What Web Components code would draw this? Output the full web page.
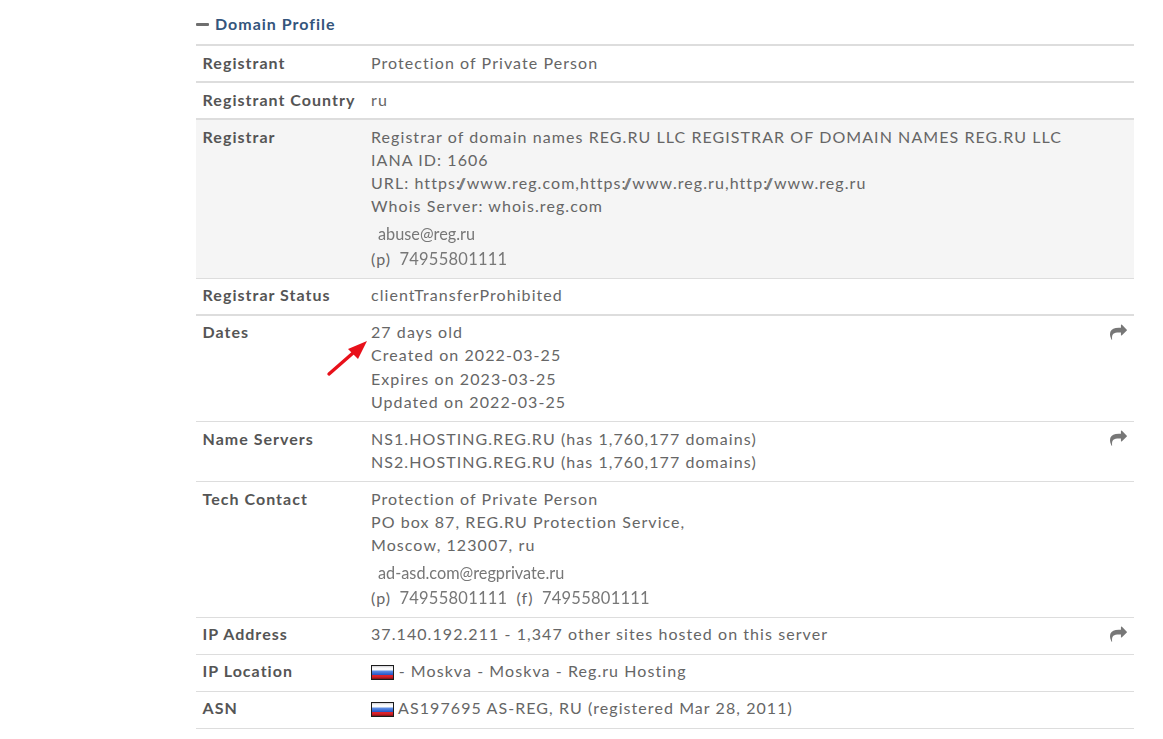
<!doctype html>
<html>
<head>
<meta charset="utf-8">
<title>Domain Profile</title>
<style>
  html, body { margin: 0; background: #fff; }
  body { font-family: "Lato", "Liberation Sans", sans-serif; color: #666; }
  .sl { letter-spacing: -2.4px; margin-right: 3px; }
</style>
</head>
<body>
<domain-profile title-text="Domain Profile">
  <profile-row label="Registrant" thick>Protection of Private Person</profile-row>
  <profile-row label="Registrant Country" thick>ru</profile-row>
  <profile-row label="Registrar" shaded>
    Registrar of domain names REG.RU LLC REGISTRAR OF DOMAIN NAMES REG.RU LLC<br>
    IANA ID: 1606<br>
    URL: https<span class="sl">://</span>www.reg.com,https<span class="sl">://</span>www.reg.ru,http<span class="sl">://</span>www.reg.ru<br>
    Whois Server: whois.reg.com
    <contact-info email="abuse@reg.ru" phone="74955801111"></contact-info>
  </profile-row>
  <profile-row label="Registrar Status" thick>clientTransferProhibited</profile-row>
  <profile-row label="Dates" share>
    27 days old<br>
    Created on 2022-03-25<br>
    Expires on 2023-03-25<br>
    Updated on 2022-03-25
    <red-arrow></red-arrow>
  </profile-row>
  <profile-row label="Name Servers" share>
    NS1.HOSTING.REG.RU (has 1,760,177 domains)<br>
    NS2.HOSTING.REG.RU (has 1,760,177 domains)
  </profile-row>
  <profile-row label="Tech Contact">
    Protection of Private Person<br>
    PO box 87, REG.RU Protection Service,<br>
    Moscow, 123007, ru
    <contact-info email="ad-asd.com@regprivate.ru" phone="74955801111" fax="74955801111"></contact-info>
  </profile-row>
  <profile-row label="IP Address" share>37.140.192.211 - 1,347 other sites hosted on this server</profile-row>
  <profile-row label="IP Location"><ru-flag></ru-flag> - Moskva - Moskva - Reg.ru Hosting</profile-row>
  <profile-row label="ASN"><ru-flag></ru-flag> AS197695 AS-REG, RU (registered Mar 28, 2011)</profile-row>
</domain-profile>

<template id="domain-profile-template">
  <style>
    :host {
      display: block;
      margin: 0 29px 0 196px;
      padding-top: 14px;
      font: 16px/23.2px "Lato", "Liberation Sans", sans-serif;
      letter-spacing: 1.07px;
      color: #666;
    }
    header {
      display: flex;
      align-items: center;
      gap: 6px;
      height: 20px;
      padding-bottom: 10px;
      border-bottom: 2px solid #ddd;
      font-weight: 700;
      letter-spacing: 1px;
      color: #34557c;
    }
    i {
      display: block;
      width: 13px;
      height: 3px;
      background: #6f6f6f;
      border-radius: 1px;
    }
  </style>
  <header><i></i><span id="title"></span></header>
  <slot></slot>
</template>

<template id="profile-row-template">
  <style>
    :host {
      display: grid;
      grid-template-columns: 168.4px 1fr 24px;
      position: relative;
      padding: 4.5px 0 8.3px 6.6px;
      border-bottom: 1px solid #ddd;
    }
    :host([shaded]) { background: #f5f5f5; }
    :host([thick]) { padding-bottom: 7.3px; border-bottom-width: 2px; }
    b { font-weight: 700; color: #555; letter-spacing: 1.02px; }
    svg { display: none; width: 17px; height: 17px; margin-top: 3.5px; fill: #777; }
    :host([share]) svg { display: block; }
  </style>
  <b id="label"></b>
  <div><slot></slot></div>
  <svg viewBox="0 0 1792 1792"><path d="M1792 640q0 26-19 45l-512 512q-19 19-45 19t-45-19-19-45v-256h-224q-98 0-175.500 6t-154 21.500-133 42.500-105.500 69.500-80 101-48.500 138.500-17.500 181q0 55 5 123 0 6 2.500 23.500t2.500 26.500q0 15-8.500 25t-23.500 10q-16 0-28-17-7-9-13-22t-13.500-30-10.500-24q-127-285-127-451 0-199 53-333 162-403 875-403h224v-256q0-26 19-45t45-19 45 19l512 512q19 19 19 45z"/></svg>
</template>

<template id="contact-info-template">
  <style>
    :host { display: block; margin: 4.5px 0 -2.5px; letter-spacing: 0; }
    .mail { padding-left: 7px; font-size: 16.3px; line-height: 24px; color: #777; filter: blur(0.3px); }
    .tel { display: flex; gap: 9px; line-height: 25px; }
    .tel span { letter-spacing: 1.1px; }
    .tel em { font-style: normal; font-size: 16.5px; letter-spacing: 0.25px; color: #777; margin-left: 3px; filter: blur(0.3px); }
    [hidden] { display: none; }
  </style>
  <div class="mail" id="mail"></div>
  <div class="tel">
    <span>(p) <em id="phone"></em></span>
    <span id="faxWrap" hidden>(f) <em id="fax"></em></span>
  </div>
</template>

<template id="ru-flag-template">
  <style>
    :host {
      display: inline-block;
      box-sizing: border-box;
      width: 23px;
      height: 15px;
      margin-right: -0.5px;
      vertical-align: -3px;
      border: 1px solid #1c1c1c;
      background: linear-gradient(#d0d0d6 0, #fcfcfc 2px, #fafbfd 4px, #5f8fe6 5px, #2a5ac8 8.5px, #e0242c 9px, #d41f27 11px, #7a1418 13px);
    }
  </style>
</template>

<template id="red-arrow-template">
  <style>
    :host { position: absolute; left: 130px; top: 22px; width: 44px; height: 40px; }
    svg { display: block; }
  </style>
  <svg width="44" height="40" viewBox="0 0 44 40">
    <path d="M3 36 L27 15" stroke="#e8101a" stroke-width="3.4" stroke-linecap="round"/>
    <path d="M41 3 L22 11 L32 21 Z" fill="#e8101a"/>
  </svg>
</template>

<script>
class BaseElement extends HTMLElement {
  constructor() {
    super();
    let template = document.getElementById(`${this.constructor.is}-template`);
    this.attachShadow({mode: 'open'});
    this.shadowRoot.appendChild(template.content.cloneNode(true));
    this.$ = {};
    this.shadowRoot.querySelectorAll('[id]').forEach((element) => {
      this.$[element.id] = element;
    });
  }
}

class DomainProfile extends BaseElement {
  static get is() { return 'domain-profile'; }
  connectedCallback() {
    this.$.title.textContent = this.getAttribute('title-text');
  }
}

class ProfileRow extends BaseElement {
  static get is() { return 'profile-row'; }
  connectedCallback() {
    this.$.label.textContent = this.getAttribute('label');
  }
}

class ContactInfo extends BaseElement {
  static get is() { return 'contact-info'; }
  connectedCallback() {
    this.$.mail.textContent = this.getAttribute('email');
    this.$.phone.textContent = this.getAttribute('phone');
    if (this.hasAttribute('fax')) {
      this.$.fax.textContent = this.getAttribute('fax');
      this.$.faxWrap.hidden = false;
    }
  }
}

class RuFlag extends BaseElement {
  static get is() { return 'ru-flag'; }
}

class RedArrow extends BaseElement {
  static get is() { return 'red-arrow'; }
}

[DomainProfile, ProfileRow, ContactInfo, RuFlag, RedArrow].forEach((c) => customElements.define(c.is, c));
</script>
</body>
</html>
